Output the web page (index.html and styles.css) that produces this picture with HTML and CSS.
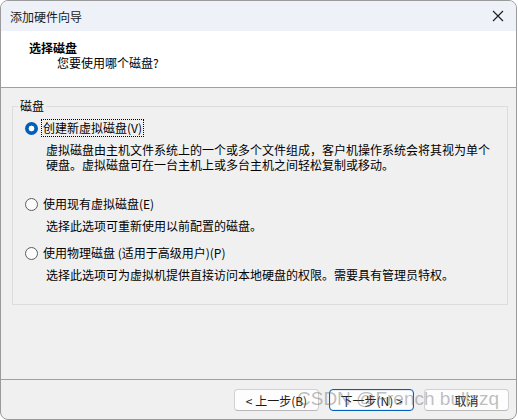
FILE: index.html
```html
<!DOCTYPE html>
<html lang="zh-CN">
<head>
  <meta charset="UTF-8" />
  <title>添加硬件向导</title>
  <link rel="stylesheet" href="styles.css">
</head>
<body>
  <div class="window">
    <div class="titlebar">
      <span class="title">添加硬件向导</span>
      <span class="close">
        <svg width="12" height="12" viewBox="0 0 12 12"><path d="M1 1 L11 11 M11 1 L1 11" stroke="#1a1a1a" stroke-width="1.1" fill="none"/></svg>
      </span>
    </div>

    <div class="header">
      <div class="header-title">选择磁盘</div>
      <div class="header-sub">您要使用哪个磁盘?</div>
    </div>

    <div class="content">
      <fieldset class="group">
        <legend>磁盘</legend>

        <div class="opt">
          <div class="opt-row">
            <span class="radio checked"></span>
            <span class="label focus">创建新虚拟磁盘(V)</span>
          </div>
          <div class="desc">虚拟磁盘由主机文件系统上的一个或多个文件组成，客户机操作系统会将其视为单个<br>硬盘。虚拟磁盘可在一台主机上或多台主机之间轻松复制或移动。</div>
        </div>

        <div class="opt opt-2">
          <div class="opt-row">
            <span class="radio"></span>
            <span class="label">使用现有虚拟磁盘(E)</span>
          </div>
          <div class="desc">选择此选项可重新使用以前配置的磁盘。</div>
        </div>

        <div class="opt opt-3">
          <div class="opt-row">
            <span class="radio"></span>
            <span class="label">使用物理磁盘 (适用于高级用户)(P)</span>
          </div>
          <div class="desc">选择此选项可为虚拟机提供直接访问本地硬盘的权限。需要具有管理员特权。</div>
        </div>
      </fieldset>
    </div>

    <div class="footer">
      <button class="btn">&lt; 上一步(B)</button>
      <button class="btn default">下一步(N) &gt;</button>
      <button class="btn">取消</button>
    </div>

    <div class="watermark">CSDN @French bullzzq</div>
  </div>
</body>
</html>
```

FILE: styles.css
```css
:root {
  --title-bg: #eef2f8;
  --face: #f0f0f0;
  --line: #a0a0a0;
  --group: #dcdcdc;
  --accent: #005fb8;
}

* {
  box-sizing: border-box;
  font-family: "Microsoft YaHei UI", "Noto Sans CJK SC", sans-serif;
}

body {
  margin: 0;
  background: #ffffff;
}

.window {
  position: relative;
  width: 517px;
  height: 420px;
  display: flex;
  flex-direction: column;
  border: 1px solid #9a9a9a;
  border-radius: 8px;
  background: var(--face);
  overflow: hidden;
  font-size: 12px;
  color: #000;
}

.titlebar {
  height: 30px;
  flex: none;
  display: flex;
  align-items: center;
  justify-content: space-between;
  background: var(--title-bg);
  padding: 0 10px 0 9px;
}

.title {
  font-size: 12px;
  color: #1a1a1a;
}

.close {
  display: flex;
  width: 12px;
  height: 12px;
  margin-right: 2px;
}

.header {
  height: 57px;
  flex: none;
  background: #ffffff;
  border-bottom: 1px solid var(--line);
  padding: 9px 0 0 28px;
}

.header-title {
  font-weight: bold;
  line-height: 16px;
}

.header-sub {
  line-height: 16px;
  margin-top: -1px;
  padding-left: 28px;
}

.content {
  flex: 1;
  padding: 10px 0 0 11px;
}

.group {
  width: 496px;
  height: 207px;
  margin: 0;
  padding: 6px 0 0 12px;
  border: 1px solid var(--group);
  border-radius: 0;
}

.group legend {
  padding: 0 2px;
  margin-left: -7px;
  line-height: 16px;
}

.opt-row {
  display: flex;
  align-items: center;
  height: 16px;
}

.opt-2 {
  margin-top: 24px;
}

.opt-3 {
  margin-top: 12px;
}

.radio {
  width: 13px;
  height: 13px;
  border-radius: 50%;
  border: 1px solid #5c5c5c;
  background: #fbfbfb;
  margin-right: 3px;
  flex: none;
}

.radio.checked {
  border: none;
  background: radial-gradient(circle, #ffffff 0 2.6px, var(--accent) 3.2px);
}

.label {
  line-height: 16px;
  padding: 0 1px;
  border: 1px dotted transparent;
}

.label.focus {
  border-color: #000;
}

.desc {
  margin-top: 6px;
  padding-left: 21px;
  line-height: 15px;
}

.footer {
  height: 40px;
  flex: none;
  border-top: 1px solid var(--line);
  display: flex;
  justify-content: flex-end;
  align-items: flex-start;
  gap: 10px;
  padding: 9px 7px 0 0;
}

.btn {
  width: 85px;
  height: 22px;
  font-size: 12px;
  padding: 0;
  background: #fdfdfd;
  border: 1px solid #d0d0d0;
  border-bottom-color: #b8b8b8;
  border-radius: 4px;
  color: #1a1a1a;
}

.btn.default {
  border: 1px solid var(--accent);
  box-shadow: inset 0 0 0 1px #e5eef8;
}

.watermark {
  position: absolute;
  left: 296px;
  top: 387px;
  font-family: "Liberation Sans", Arial, sans-serif;
  font-size: 19px;
  color: rgba(110, 110, 110, 0.45);
  white-space: nowrap;
  pointer-events: none;
}
```
